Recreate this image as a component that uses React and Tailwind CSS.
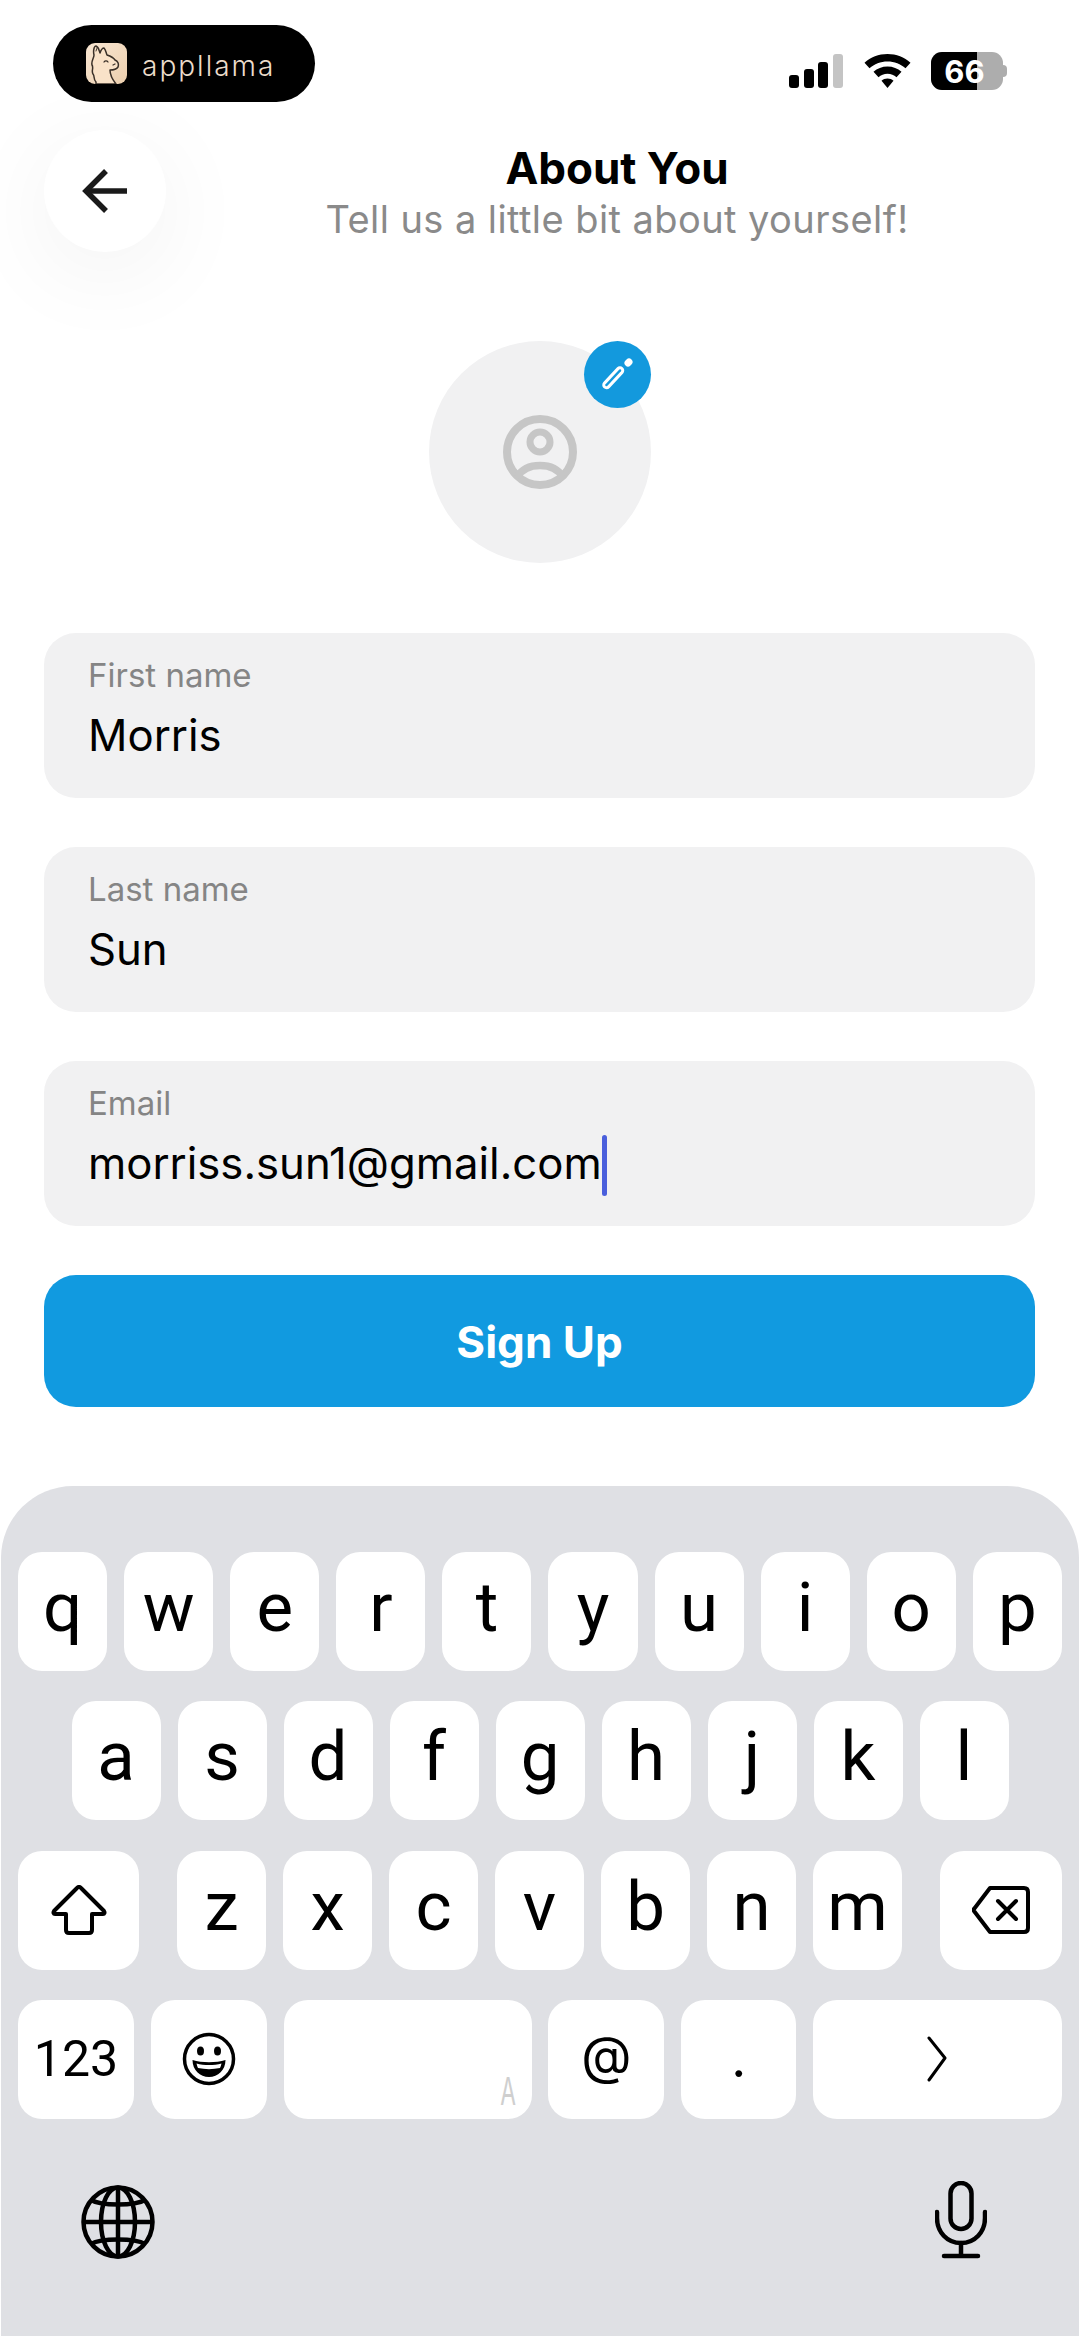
import React from 'react';

const inter = { fontFamily: 'Inter, sans-serif' };

function StatusIcons() {
    return (
        <div className="flex items-center h-[38px] mt-[27px]">
            <div className="flex items-end gap-[4.670px] h-[34px]">
                <div className="w-[10px] h-[13px] rounded-[3px] bg-black"></div>
                <div className="w-[10px] h-[19px] rounded-[3px] bg-black"></div>
                <div className="w-[10px] h-[26px] rounded-[3px] bg-black"></div>
                <div className="w-[10px] h-[34px] rounded-[3px] bg-[#c4c4c4]"></div>
            </div>
            <svg className="ml-[21px]" width="47" height="34" viewBox="0 0 47 34">
                <path d="M23.5 0C14.6 0 6.6 3.3 0.5 8.8L5.5 14.3C10.3 10 16.6 7.4 23.5 7.4S36.700 10 41.500 14.300L46.500 8.800C40.400 3.300 32.400 0 23.500 0Z" fill="#000" />
                <path d="M23.500 12.500C18.100 12.500 13.200 14.500 9.500 17.800L14.500 23.300C16.900 21.100 20 19.800 23.500 19.800S30.100 21.100 32.500 23.300L37.500 17.800C33.800 14.500 28.900 12.500 23.500 12.500Z" fill="#000" />
                <path d="M23.500 24.500C21.200 24.500 19.100 25.300 17.500 26.800L23.500 34L29.500 26.800C27.900 25.300 25.800 24.500 23.500 24.500Z" fill="#000" />
            </svg>
            <div className="relative ml-[20px] w-[72px] h-[38px] rounded-[11px] overflow-hidden bg-[#adadad]">
                <div className="w-[46px] h-full bg-black"></div>
                <div className="absolute inset-0 flex items-center justify-center pr-[5px] text-white text-[31px] font-bold leading-none" style={inter}>66</div>
            </div>
            <div className="w-[4px] h-[12px] rounded-r-full bg-[#adadad]"></div>
        </div>
    );
}

function LlamaLogo() {
    return (
        <div className="w-[41px] h-[41px] rounded-[9px] overflow-hidden bg-gradient-to-br from-[#f8e6d2] to-[#eccfae] shrink-0">
            <svg width="41" height="41" viewBox="0 0 41 41" fill="none">
                <path d="M10 41V39C7 36 9 33 7 31C5 28 8 25 6 22C5 18 8 15 8 12C7 8 8 3 10 3C13 4 13 8 14 10C15 7 17 5 18 5C20 7 20 10 21 12C24 13 27 14 29 17C32 18 33 21 32 24C30 27 26 27 24 27C24 31 26 36 30 41Z" fill="#f9e2c8" stroke="#3a3028" strokeWidth="1.500" strokeLinejoin="round" />
                <path d="M18 19C19 17.500 21 17.500 22 19" stroke="#3a3028" strokeWidth="1.300" strokeLinecap="round" />
                <path d="M29 21L27 22" stroke="#3a3028" strokeWidth="1.200" strokeLinecap="round" />
                <path d="M10 8C10.500 6 11 5.500 11 5" stroke="#3a3028" strokeWidth="1" strokeLinecap="round" />
            </svg>
        </div>
    );
}

function BackArrow() {
    return (
        <svg width="46" height="46" viewBox="0 0 46 46" fill="none" stroke="#1a1a1a" strokeWidth="5.500" strokeLinejoin="miter">
            <path d="M45 23H4" />
            <path d="M24 3L4 23L24 43" />
        </svg>
    );
}

function UserIcon() {
    return (
        <svg width="74" height="74" viewBox="0 0 74 74" fill="none" stroke="#c6c6c6">
            <circle cx="37" cy="37" r="33" strokeWidth="8" />
            <circle cx="37" cy="27" r="10" strokeWidth="7" />
            <path d="M14 62C19 54 27 50.500 37 50.500S55 54 60 62" strokeWidth="7.500" />
        </svg>
    );
}

function PencilIcon() {
    return (
        <svg width="67" height="67" viewBox="0 0 67 67" fill="none" strokeLinecap="round">
            <path d="M22.500 44L36 29.500" stroke="#fff" strokeWidth="8.500" />
            <path d="M22.500 44L36 29.500" stroke="#1399dd" strokeWidth="2.500" />
            <path d="M44 22L45 21" stroke="#fff" strokeWidth="7" />
        </svg>
    );
}

function Field({ label, value, caret }) {
    return (
        <div className="h-[165px] rounded-[32px] bg-[#f1f1f2] pl-[44px] pt-[22px]">
            <div className="text-[33px] leading-[40px] text-[#858585]" style={inter}>{label}</div>
            <div className="flex items-center mt-[11px] h-[60px] text-[43.700px] leading-[60px] text-black" style={inter}>
                {value}
                {caret && <div className="w-[5px] h-[61px] mt-[3px] rounded-full bg-[#4a5fdc]"></div>}
            </div>
        </div>
    );
}

function Key({ children, className = 'flex-1' }) {
    return (
        <div className={`relative h-[119px] rounded-[24px] bg-white flex items-center justify-center text-black ${className}`}>
            {children}
        </div>
    );
}

function Letter({ children }) {
    return <span className="text-[69px] leading-none -mt-[8px]" style={{ fontFamily: 'Roboto, sans-serif' }}>{children}</span>;
}

function ShiftIcon() {
    return (
        <svg width="56" height="50" viewBox="0 0 56 50" fill="none" stroke="#000" strokeWidth="4" strokeLinejoin="round">
            <path d="M26 3C27 1.500 29 1.500 30 3L53 26C54 27.500 53.500 29 52 29H41V45C41 47 40 48 38 48H18C16 48 15 47 15 45V29H4C2.500 29 2 27.500 3 26Z" />
        </svg>
    );
}

function DeleteIcon() {
    return (
        <svg width="58" height="48" viewBox="0 0 58 48" fill="none" stroke="#000" strokeWidth="4" strokeLinecap="round" strokeLinejoin="round">
            <path d="M18 2H52C54.500 2 56 3.500 56 6V42C56 44.500 54.500 46 52 46H18L2 25C1.500 24 1.500 23.500 2 23Z" />
            <path d="M26 15L44 33M44 15L26 33" />
        </svg>
    );
}

function EmojiIcon() {
    return (
        <svg width="54" height="54" viewBox="0 0 54 54" fill="none">
            <circle cx="27" cy="27" r="24.500" stroke="#000" strokeWidth="3.500" />
            <ellipse cx="18.500" cy="19" rx="3.500" ry="4.500" fill="#000" />
            <ellipse cx="35.500" cy="19" rx="3.500" ry="4.500" fill="#000" />
            <path d="M10.500 28C20 31 34 31 43.500 28C43.500 38 36 45 27 45S10.500 38 10.500 28Z" fill="#000" />
            <path d="M14.500 31.500C22 33.500 32 33.500 39.500 31.500C39 33.500 38.500 35 38 36C31 37.500 23 37.500 16 36C15.500 35 15 33.500 14.500 31.500Z" fill="#fff" />
        </svg>
    );
}

function ReturnChevron() {
    return (
        <svg width="20" height="46" viewBox="0 0 20 46" fill="none" stroke="#000" strokeWidth="3" strokeLinecap="round" strokeLinejoin="round">
            <path d="M2 2L18 22L2 44" />
        </svg>
    );
}

function GlobeIcon() {
    return (
        <svg width="74" height="74" viewBox="0 0 74 74" fill="none" stroke="#000" strokeWidth="4.500">
            <circle cx="37" cy="37" r="34.500" />
            <ellipse cx="37" cy="37" rx="17" ry="34.500" />
            <path d="M37 2V72M2 37H72" />
            <path d="M10 15C20 21 54 21 64 15" />
            <path d="M10 59C20 53 54 53 64 59" />
        </svg>
    );
}

function MicIcon() {
    return (
        <svg className="-mt-[4px]" width="52" height="78" viewBox="0 0 52 78" fill="none" stroke="#000" strokeWidth="4.500" strokeLinecap="round">
            <rect x="15.500" y="2" width="21" height="46" rx="10.500" />
            <path d="M2 31V37C2 51 12 62 26 62S50 51 50 37V31" />
            <path d="M26 62V75M9 75H43" />
        </svg>
    );
}

export default function App() {
    const row1 = ['q', 'w', 'e', 'r', 't', 'y', 'u', 'i', 'o', 'p'];
    const row2 = ['a', 's', 'd', 'f', 'g', 'h', 'j', 'k', 'l'];
    const row3 = ['z', 'x', 'c', 'v', 'b', 'n', 'm'];

    return (
        <div className="w-[1080px] h-[2336px] bg-white overflow-hidden flex flex-col" style={inter}>
            {/* status bar */}
            <div className="flex justify-between pl-[53px] pr-[73px] pt-[25px]">
                <div className="w-[262px] h-[77px] rounded-full bg-black flex items-center pl-[33px]">
                    <LlamaLogo />
                    <span className="ml-[15px] mt-[4px] text-[28px] leading-none font-light tracking-[2px] text-[#ecdccb]" style={inter}>appllama</span>
                </div>
                <StatusIcons />
            </div>

            {/* header */}
            <div className="flex pl-[44px] pr-[12px] mt-[28px]">
                <div className="w-[122px] h-[122px] rounded-full bg-white shadow-[0_20px_100px_rgba(0,0,0,0.06)] flex items-center justify-center shrink-0">
                    <BackArrow />
                </div>
                <div className="flex-1 text-center pt-[13px]">
                    <div className="text-[44px] leading-[50px] font-bold text-black">About You</div>
                    <div className="mt-[1px] text-[38px] leading-[50px] tracking-[0.430px] text-[#8a8a8a]">Tell us a little bit about yourself!</div>
                </div>
            </div>

            {/* avatar */}
            <div className="flex justify-center mt-[89px]">
                <div className="relative w-[222px] h-[222px] rounded-full bg-[#f1f1f2] flex items-center justify-center">
                    <UserIcon />
                    <div className="absolute top-0 right-0 w-[67px] h-[67px] rounded-full bg-[#1399dd]">
                        <PencilIcon />
                    </div>
                </div>
            </div>

            {/* form */}
            <div className="flex flex-col gap-[49px] ml-[44px] mr-[45px] mt-[70px]">
                <Field label="First name" value="Morris" />
                <Field label="Last name" value="Sun" />
                <Field label="Email" value="morriss.sun1@gmail.com" caret />
                <div className="h-[132px] rounded-[32px] bg-[#119ae0] flex items-center justify-center pt-[1px] text-white text-[44px] font-bold">Sign Up</div>
            </div>

            {/* keyboard */}
            <div className="flex-1 mt-[79px] mx-[1px] rounded-t-[72px] bg-[#dfe0e4] pt-[66px] px-[17px]">
                <div className="flex flex-col gap-[30.300px]">
                    <div className="flex gap-[17px]">
                        {row1.map((k) => <Key key={k}><Letter>{k}</Letter></Key>)}
                    </div>
                    <div className="flex justify-center gap-[17px]">
                        {row2.map((k) => <Key key={k} className="w-[89px]"><Letter>{k}</Letter></Key>)}
                    </div>
                    <div className="flex justify-between">
                        <Key className="w-[121px]"><ShiftIcon /></Key>
                        <div className="flex gap-[17px]">
                            {row3.map((k) => <Key key={k} className="w-[89px]"><Letter>{k}</Letter></Key>)}
                        </div>
                        <Key className="w-[122px]"><DeleteIcon /></Key>
                    </div>
                    <div className="flex gap-[16.800px]">
                        <Key className="w-[116px]"><span className="text-[50px] leading-none" style={{ fontFamily: 'Roboto, sans-serif' }}>123</span></Key>
                        <Key className="w-[116px]"><EmojiIcon /></Key>
                        <Key className="w-[248px]">
                            <span className="absolute right-[10px] bottom-[9px] text-[38px] leading-[38px] text-[#cfcfcf] scale-x-[0.6]" style={inter}>A</span>
                        </Key>
                        <Key className="w-[116px]"><span className="text-[52px] leading-none -mt-[6px]">@</span></Key>
                        <Key className="w-[115px]"><span className="text-[52px] leading-none">.</span></Key>
                        <Key className="w-[249px]"><ReturnChevron /></Key>
                    </div>
                </div>
                <div className="flex justify-between items-center pl-[63px] pr-[75px] mt-[66px]">
                    <GlobeIcon />
                    <MicIcon />
                </div>
            </div>
        </div>
    );
}
